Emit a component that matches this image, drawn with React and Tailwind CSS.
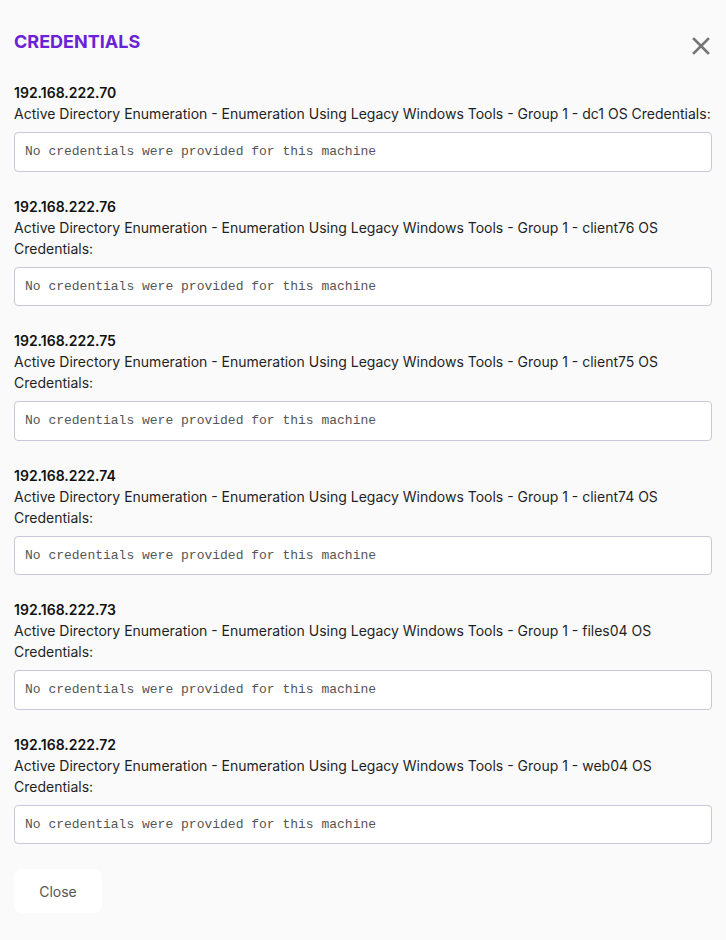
import React from "react";

const items = [
  ["192.168.222.70", "dc1"],
  ["192.168.222.76", "client76"],
  ["192.168.222.75", "client75"],
  ["192.168.222.74", "client74"],
  ["192.168.222.73", "files04"],
  ["192.168.222.72", "web04"],
];

export default function App() {
  return (
    <div className="min-h-[940px] bg-[#fafafa] px-[14px] pt-[31px] pb-[28px] text-[#1a1a1a]" style={{ fontFamily: "Inter, 'Noto Sans', sans-serif" }}>
      <div className="flex items-start justify-between">
        <h2 className="text-[18px] font-bold leading-[22px] text-[#6a22d6]">CREDENTIALS</h2>
        <button className="mt-[6px] mr-[2px] text-[#757575]">
          <svg width="18" height="18" viewBox="0 0 18 18" fill="none" stroke="currentColor" strokeWidth="2.6" strokeLinecap="square">
            <path d="M2 2L16 16M16 2L2 16" />
          </svg>
        </button>
      </div>
      <div className="mt-[27px] flex flex-col gap-[24px]">
        {items.map(([ip, host]) => (
          <div key={ip}>
            <div className="text-[14px] font-semibold leading-[21px] text-[#111]">{ip}</div>
            <div className="text-[14px] leading-[21px] text-[#1f1f1f]">
              Active Directory Enumeration - Enumeration Using Legacy Windows Tools - Group 1 - {host} OS Credentials:
            </div>
            <div className="mt-[8px] flex h-[39.5px] items-center rounded-[4px] border border-[#c9c7d9] bg-white px-[10px] text-[13px] text-[#555]" style={{ fontFamily: "'Liberation Mono', monospace" }}>
              No credentials were provided for this machine
            </div>
          </div>
        ))}
      </div>
      <button className="mt-[25px] h-[44px] w-[88px] rounded-[8px] bg-white text-[14px] text-[#555]">Close</button>
    </div>
  );
}
